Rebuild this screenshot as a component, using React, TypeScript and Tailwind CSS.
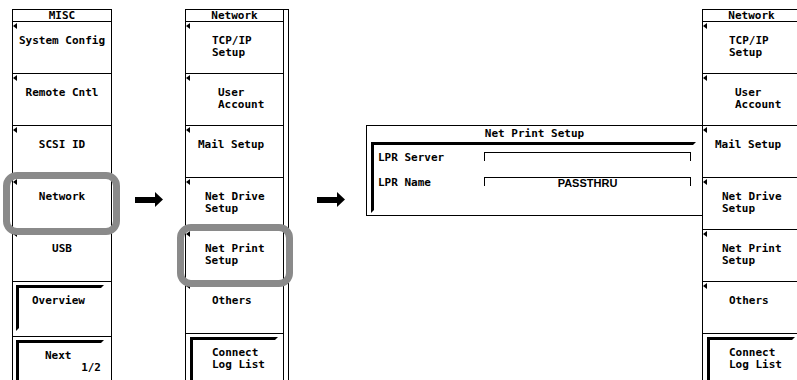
import React from 'react';

type SoftKey = {
  lines: string[];
  pad: string;
  bevel?: boolean;
  page?: string;
};

const mono = "font-['DejaVu_Sans_Mono',monospace] font-bold text-[11px] leading-[12px] text-black";

const miscKeys: SoftKey[] = [
  { lines: ['System Config'], pad: 'text-center' },
  { lines: ['Remote Cntl'], pad: 'text-center' },
  { lines: ['SCSI ID'], pad: 'text-center' },
  { lines: ['Network'], pad: 'text-center' },
  { lines: ['USB'], pad: 'text-center' },
  { lines: ['Overview'], pad: 'pl-[13px]', bevel: true },
  { lines: ['Next'], pad: 'pl-[26px]', bevel: true, page: '1/2' },
];

const networkKeys: SoftKey[] = [
  { lines: ['TCP/IP', 'Setup'], pad: 'pl-[26px]' },
  { lines: ['User', 'Account'], pad: 'pl-[32px]' },
  { lines: ['Mail Setup'], pad: 'pl-[12px]' },
  { lines: ['Net Drive', 'Setup'], pad: 'pl-[19px]' },
  { lines: ['Net Print', 'Setup'], pad: 'pl-[19px]' },
  { lines: ['Others'], pad: 'pl-[26px]' },
  { lines: ['Connect', 'Log List'], pad: 'pl-[19px]', bevel: true },
];

const Key = ({ k, last, indent }: { k: SoftKey; last: boolean; indent: string }) => (
  <div className={`relative h-[52px] ${last ? '' : 'border-b border-black'}`}>
    {k.bevel ? (
      <div
        className={`${indent} mt-[3px] w-[88px] h-[46px] border-[3px] border-t-black border-l-black border-r-transparent border-b-transparent pt-[7px] ${k.pad}`}
      >
        {k.lines.map((l) => (
          <div key={l}>{l}</div>
        ))}
        {k.page && <div className="text-right">{k.page}</div>}
      </div>
    ) : (
      <>
        <div className="absolute left-0 top-[1px] w-0 h-0 border-y-[3px] border-y-transparent border-r-[4px] border-r-black" />
        <div className={`pt-[13px] ${k.pad}`}>
          {k.lines.map((l) => (
            <div key={l} className="whitespace-pre">
              {l}
            </div>
          ))}
        </div>
      </>
    )}
  </div>
);

const Header = ({ title }: { title: string }) => (
  <div className="h-[12px] border-b border-black text-center leading-[11px]">{title}</div>
);

const Arrow = () => (
  <svg width="28" height="15" viewBox="0 0 28 15" className="shrink-0 mt-[192px]">
    <rect x="0" y="5" width="20" height="6" fill="#000" />
    <polygon points="20,0 28,7.5 20,15" fill="#000" />
  </svg>
);

export default function App() {
  return (
    <div className={`relative w-[797px] h-[380px] overflow-hidden bg-white ${mono}`}>
      <div className="flex items-start">
        {/* MISC menu */}
        <div className="shrink-0 ml-[12px] mt-[9px] w-[100px] h-[380px] border-t border-x border-black">
          <Header title="MISC" />
          {miscKeys.map((k, i) => (
            <Key key={i} k={k} last={i === miscKeys.length - 1} indent="ml-[3px]" />
          ))}
        </div>

        <div className="ml-[23px]">
          <Arrow />
        </div>

        {/* Network menu */}
        <div className="shrink-0 ml-[22px] mt-[9px] w-[104px] h-[380px] border-t border-r border-black">
          <div className="w-[99px] h-full border-x border-black">
            <Header title="Network" />
            {networkKeys.map((k, i) => (
              <Key key={i} k={k} last={i === networkKeys.length - 1} indent="ml-[4px]" />
            ))}
          </div>
        </div>

        <div className="ml-[28px]">
          <Arrow />
        </div>

        {/* Net Print Setup dialog */}
        <div className="shrink-0 ml-[21px] mt-[125px] w-[336px] h-[91px] border-l border-y border-black">
          <div className="h-[16px] pt-[2px] text-center">Net Print Setup</div>
          <div className="ml-[4px] mr-[6px] h-[71px] border-[3px] border-t-black border-l-black border-r-transparent border-b-transparent pt-[6px]">
            <div className="flex h-[25px]">
              <div className="w-[110px] pl-[4px] mt-[1px]">LPR Server</div>
              <div className="w-[207px] h-[9px] mt-[1px] border-t border-x border-black" />
            </div>
            <div className="flex h-[25px]">
              <div className="w-[110px] pl-[4px] mt-[1px]">LPR Name</div>
              <div className="w-[207px] h-[9px] mt-[1px] border-t border-x border-black text-center font-['Liberation_Sans',sans-serif] leading-[10px]">
                PASSTHRU
              </div>
            </div>
          </div>
        </div>

        {/* Network menu (result) */}
        <div className="shrink-0 mt-[9px] w-[99px] h-[380px] border-t border-x border-black">
          <Header title="Network" />
          {networkKeys.map((k, i) => (
            <Key key={i} k={k} last={i === networkKeys.length - 1} indent="ml-[4px]" />
          ))}
        </div>
      </div>

      {/* selection highlights */}
      <div className="absolute left-[3px] top-[172px] w-[117px] h-[63px] rounded-[14px] border-[7px] border-[#8a8a8a]" />
      <div className="absolute left-[177px] top-[224px] w-[116px] h-[63px] rounded-[14px] border-[7px] border-[#8a8a8a]" />
    </div>
  );
}
